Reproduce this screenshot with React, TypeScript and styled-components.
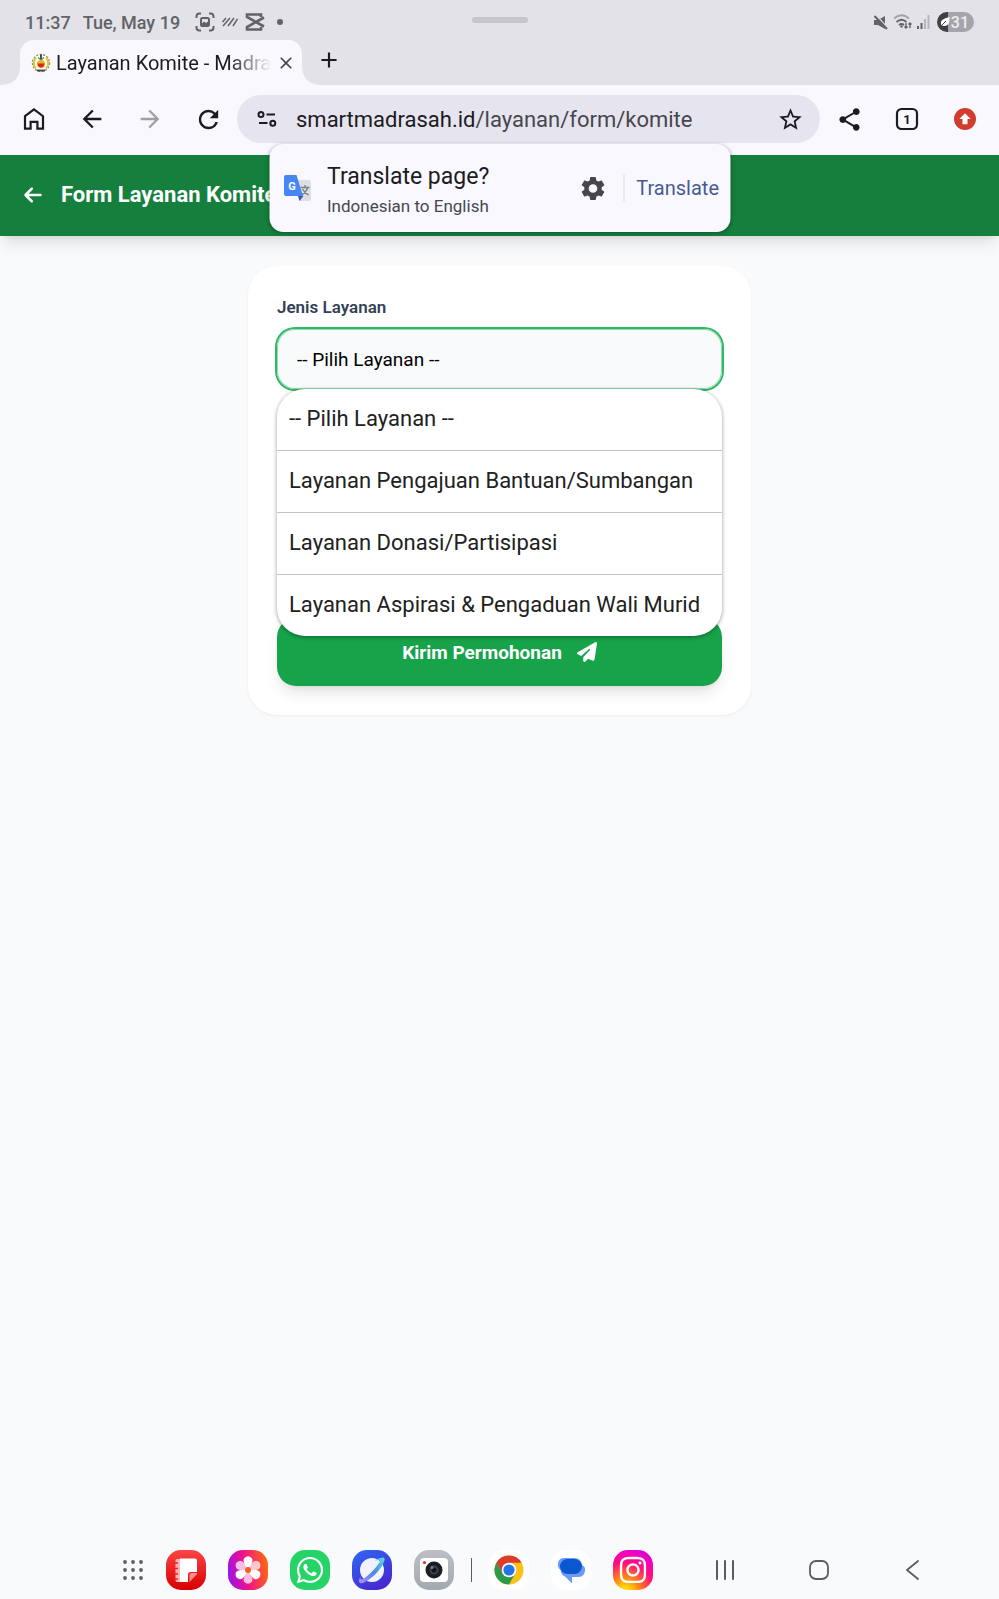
import React, { useState } from 'react'
import styled, { createGlobalStyle } from 'styled-components'
import {
	MdArrowBack,
	MdArrowForward,
	MdClose,
	MdAdd,
	MdRefresh,
	MdSettings,
	MdShare,
	MdStarBorder,
} from 'react-icons/md'
import { FaArrowLeft, FaPaperPlane, FaWhatsapp, FaInstagram } from 'react-icons/fa6'

const SERVICES = [
	{ id: '', name: '-- Pilih Layanan --' },
	{ id: 'bantuan', name: 'Layanan Pengajuan Bantuan/Sumbangan' },
	{ id: 'donasi', name: 'Layanan Donasi/Partisipasi' },
	{ id: 'aspirasi', name: 'Layanan Aspirasi & Pengaduan Wali Murid' },
]

const GlobalStyle = createGlobalStyle`
	* {
		box-sizing: border-box;
	}
	body {
		margin: 0;
		background: #f8fafc;
		font-family: Roboto, 'Liberation Sans', sans-serif;
	}
	button,
	select {
		font-family: inherit;
	}
	svg {
		display: block;
		flex-shrink: 0;
	}
`

const Screen = styled.div`
	min-height: 100vh;
	display: flex;
	flex-direction: column;
`

const PlainButton = styled.button`
	display: flex;
	align-items: center;
	justify-content: center;
	padding: 0;
	border: none;
	background: none;
	color: inherit;
	cursor: pointer;
`

/* status bar and tabs */

const TopArea = styled.div`
	background: #e2e2e8;
`

const StatusBar = styled.div`
	height: 40px;
	padding: 4px 25px 0;
	display: grid;
	grid-template-columns: 1fr auto 1fr;
	align-items: center;
	color: #626367;
	font-size: 18px;
	font-weight: 500;
`

const StatusGroup = styled.div<{ $end?: boolean }>`
	display: flex;
	align-items: center;
	justify-content: ${(p) => (p.$end ? 'flex-end' : 'flex-start')};
	gap: ${(p) => (p.$end ? 5 : 7)}px;
`

const StatusDate = styled.span`
	margin: 0 8px 0 5px;
`

const StatusDot = styled.span`
	width: 6px;
	height: 6px;
	margin-left: 5px;
	border-radius: 50%;
	background: currentColor;
`

const Handle = styled.div`
	width: 56px;
	height: 6px;
	margin-bottom: 4px;
	border-radius: 3px;
	background: #c6c6ca;
`

const Battery = styled.span`
	width: 37px;
	height: 20px;
	margin-left: 2px;
	padding: 0 5px 0 3px;
	display: flex;
	align-items: center;
	justify-content: space-between;
	border-radius: 10px;
	background: linear-gradient(90deg, #3f4044 31%, #a5a5a9 31%);
	color: #ececf0;
	font-size: 16px;
`

const TabStrip = styled.div`
	height: 45px;
	padding-left: 20px;
	display: flex;
`

const Tab = styled.div`
	position: relative;
	width: 282px;
	padding: 0 8px 0 11px;
	display: flex;
	align-items: center;
	gap: 5px;
	border-radius: 14px 14px 0 0;
	background: #f9f8fe;
	color: #46464d;
	&::before,
	&::after {
		content: '';
		position: absolute;
		bottom: 0;
		width: 16px;
		height: 16px;
	}
	&::before {
		right: 100%;
		background: radial-gradient(circle at 0 0, transparent 15px, #f9f8fe 16px);
	}
	&::after {
		left: 100%;
		background: radial-gradient(circle at 100% 0, transparent 15px, #f9f8fe 16px);
	}
`

const TabTitle = styled.span`
	flex: 1;
	white-space: nowrap;
	font-size: 20px;
	color: #1c1b21;
	mask-image: linear-gradient(90deg, #000 80%, transparent);
`

const NewTab = styled(PlainButton)`
	width: 54px;
	padding-bottom: 6px;
	color: #1c1b21;
`

/* address bar */

const Toolbar = styled.div`
	position: relative;
	z-index: 2;
	height: 70px;
	padding: 0 5px 2px;
	display: flex;
	align-items: center;
	background: #f9f8fe;
	color: #1c1b21;
`

const ToolButton = styled(PlainButton)<{ $faded?: boolean }>`
	width: 58px;
	height: 48px;
	opacity: ${(p) => (p.$faded ? 0.4 : 1)};
`

const Omnibox = styled.div`
	flex: 1;
	min-width: 0;
	height: 48px;
	padding: 0 16px 0 20px;
	display: flex;
	align-items: center;
	gap: 19px;
	border-radius: 24px;
	background: #e6e4ee;
`

const Address = styled.span`
	flex: 1;
	white-space: nowrap;
	font-size: 22px;
	color: #1c1b21;
`

const AddressPath = styled.span`
	color: #46464f;
`

const TranslateCard = styled.div`
	position: absolute;
	top: 59px;
	left: 50%;
	transform: translateX(-50%);
	width: 461px;
	height: 88px;
	padding: 0 11px 0 14px;
	display: flex;
	align-items: center;
	border-radius: 14px;
	background: #f9f8fe;
	box-shadow: 0 1px 4px rgba(0, 0, 0, 0.35);
`

const TranslateText = styled.div`
	flex: 1;
	margin-left: 15px;
	padding-top: 3px;
`

const TranslateTitle = styled.div`
	font-size: 23px;
	line-height: 32px;
`

const TranslateInfo = styled.div`
	font-size: 17px;
	line-height: 26px;
	color: #46464f;
`

const TranslateAction = styled(PlainButton)`
	height: 28px;
	margin-left: 16px;
	padding-left: 12px;
	border-left: 1px solid #dcdbe4;
	font-size: 20px;
	color: #465b96;
`

/* form page */

const PageHeader = styled.header`
	height: 81px;
	padding: 0 23px 2px;
	display: flex;
	align-items: center;
	gap: 18px;
	background: #15803d;
	box-shadow: 0 10px 15px -3px rgba(0, 0, 0, 0.1), 0 4px 6px -4px rgba(0, 0, 0, 0.1);
	color: #fff;
`

const BackLink = styled.a`
	color: inherit;
`

const PageTitle = styled.h1`
	margin: 0;
	font-size: 22px;
	font-weight: 700;
`

const Main = styled.main`
	flex: 1;
	padding: 30px 20px;
`

const Card = styled.form`
	width: 100%;
	max-width: 503px;
	margin: 0 auto;
	padding: 29px;
	border-radius: 29px;
	background: #fff;
	box-shadow: 0 1px 3px rgba(0, 0, 0, 0.06);
`

const FieldLabel = styled.label`
	display: block;
	margin-bottom: 10px;
	font-size: 17px;
	font-weight: 600;
	line-height: 24px;
	color: #334155;
`

const SelectBlock = styled.div`
	position: relative;
	margin-bottom: 229px;
`

const Select = styled.select`
	appearance: none;
	display: block;
	width: 100%;
	height: 60px;
	padding: 0 20px;
	border: none;
	border-radius: 18px;
	outline: none;
	background: #f8fafc;
	box-shadow: 0 0 0 2px #2fb865, inset 0 0 0 1px #8fdcae;
	font-size: 19px;
	color: #000;
`

const OptionList = styled.ul`
	position: absolute;
	top: 100%;
	left: 0;
	right: 0;
	margin: 0;
	padding: 0;
	overflow: hidden;
	list-style: none;
	border-radius: 28px;
	background: #fff;
	box-shadow: 0 1px 4px rgba(0, 0, 0, 0.4);
`

const OptionRow = styled.li`
	& + & {
		border-top: 1px solid #c4c4c4;
	}
`

const OptionButton = styled(PlainButton)`
	width: 100%;
	height: 61px;
	padding: 0 12px 2px;
	justify-content: flex-start;
	font-size: 22px;
	color: #212121;
`

const SubmitButton = styled(PlainButton)`
	width: 100%;
	height: 68px;
	gap: 15px;
	border-radius: 19px;
	background: #16a34a;
	box-shadow: 0 10px 15px -3px rgba(0, 0, 0, 0.1), 0 4px 6px -4px rgba(0, 0, 0, 0.1);
	font-size: 19px;
	font-weight: 700;
	color: #fff;
`

/* bottom dock */

const Dock = styled.nav`
	height: 58px;
	padding-left: 82px;
	display: flex;
	align-items: center;
	justify-content: center;
	color: #5c5d60;
`

const DockApps = styled.div`
	display: flex;
	align-items: center;
	gap: 22px;
`

const DockDivider = styled.span`
	width: 1px;
	height: 24px;
	margin: 0 -5px;
	background: #5c5d60;
`

const SystemKeys = styled.div`
	margin-left: 25px;
	display: flex;
`

const SystemKey = styled(PlainButton)`
	width: 94px;
	height: 40px;
`

const AppButton = styled(PlainButton)<{ $fill?: string }>`
	width: 40px;
	height: 40px;
	overflow: hidden;
	border-radius: 15px;
	background: ${(p) => p.$fill || 'none'};
	color: #fff;
`

const LogoIcon = () => (
	<svg width="20" height="20" viewBox="0 0 20 20">
		<circle cx="10" cy="10" r="8.500" fill="#fff" stroke="#8a8d5a" strokeWidth="1.400" strokeDasharray="2 1.500" />
		<path d="M5 4.500a8 8 0 0 0 0 11M15 4.500a8 8 0 0 1 0 11" fill="none" stroke="#e0c53a" strokeWidth="2" />
		<path d="M10 1.500v6" stroke="#222" strokeWidth="1.600" />
		<path d="M7 4.500 10 7l3-2.500" fill="none" stroke="#3c9a52" strokeWidth="1.200" />
		<circle cx="10" cy="11" r="4" fill="#efae23" />
		<path d="M6.500 10.500h7q-.5 4-3.500 4t-3.500-4z" fill="#d52a20" />
		<path d="M6 17.500h8" stroke="#444" strokeWidth="1.800" />
	</svg>
)

const HomeIcon = () => (
	<svg width="24" height="24" viewBox="0 0 24 24" fill="none" stroke="currentColor" strokeWidth="2.2">
		<path d="M3 9.200 12 2.400l9 6.800v12.400h-5.600v-6.800H8.600v6.800H3z" />
	</svg>
)

const TuneIcon = () => (
	<svg width="20" height="20" viewBox="0 0 20 20" fill="none" stroke="currentColor" strokeWidth="2">
		<circle cx="4" cy="5.500" r="2.500" />
		<path d="M9.500 5.500H18M2 14h8.500" />
		<circle cx="15.800" cy="14.200" r="2.500" />
	</svg>
)

const TabCountIcon = () => (
	<svg width="24" height="24" viewBox="0 0 24 24">
		<rect x="2" y="2" width="20" height="20" rx="4.500" fill="none" stroke="currentColor" strokeWidth="2.200" />
		<text x="12" y="16.500" textAnchor="middle" fontSize="13" fontWeight="700" fill="currentColor">
			1
		</text>
	</svg>
)

const UpdateIcon = () => (
	<svg width="22" height="22" viewBox="0 0 22 22">
		<circle cx="11" cy="11" r="11" fill="#d03d2e" />
		<path d="M11 5.200 5.300 11h3.200v5.200h5V11h3.200z" fill="#fff" />
	</svg>
)

const TranslateIcon = () => (
	<svg width="29" height="28" viewBox="0 0 29 28">
		<path d="M12 6h13.500q2 0 2 2v17q0 2-2 2H16z" fill="#dddfe3" />
		<path d="M17 13.500h9M21.500 11v2.500M24.500 13.500q-2 5-6.500 7.500M19 15q2 4 6 6" fill="none" stroke="#7b8088" strokeWidth="1.400" />
		<path d="M14.500 22h5.500l-4 5z" fill="#3558c4" />
		<path d="M2.500 1h10.500l6.500 21H2.500Q.5 22 .5 20V3q0-2 2-2z" fill="#4688f1" />
		<text x="8.500" y="15.500" textAnchor="middle" fontSize="11" fontWeight="700" fill="#fff">
			G
		</text>
	</svg>
)

const CaptureIcon = () => (
	<svg width="20" height="20" viewBox="0 0 20 20" fill="none" stroke="currentColor" strokeWidth="2">
		<path d="M1.500 6V4.500q0-3 3-3H6M14 1.500h1.500q3 0 3 3V6M18.500 14v1.500q0 3-3 3H14M6 18.500H4.500q-3 0-3-3V14" />
		<rect x="6" y="6" width="8" height="8" rx="1.500" />
		<path d="m6 13 3-3 2 1.500L13 10v4H6z" fill="currentColor" strokeWidth="1" />
	</svg>
)

const StripesIcon = () => (
	<svg width="16" height="10" viewBox="0 0 16 10" stroke="currentColor" strokeWidth="1.500">
		<path d="m.5 5 3.500-4M1 9l7-8M6 9l6-8M11 9l4.500-7" />
	</svg>
)

const CapcutIcon = () => (
	<svg width="20" height="18" viewBox="0 0 20 18" fill="none" stroke="currentColor" strokeWidth="2.600">
		<path d="M19 4.500 2 14v2.500h14V14M19 13.500 2 4V1.500h14V4" />
	</svg>
)

const MuteIcon = () => (
	<svg width="14" height="15" viewBox="0 0 14 15" fill="currentColor">
		<path d="M0 5h4l7-4v13l-7-4H0z" />
		<path d="m2 0 12 13" stroke="#e2e2e8" strokeWidth="1.200" />
		<path d="m.5 1 12.500 13" stroke="currentColor" strokeWidth="2" />
	</svg>
)

const WifiIcon = () => (
	<svg width="19" height="16" viewBox="0 0 19 16" fill="none" stroke="currentColor" strokeWidth="1.700">
		<path d="M1 4.500q7.500-6.500 15 0" opacity=".5" />
		<path d="M3.500 8q5-4.500 10 0M6 11q2.500-2 5 0" />
		<circle cx="8.500" cy="12.500" r="1.200" fill="currentColor" stroke="none" />
		<path d="M13 9v5m-1.500-1.500L13 14l1.500-1.500M17 14V9m-1.500 1.500L17 9l1.500 1.500" strokeWidth="1.400" />
	</svg>
)

const SignalIcon = () => (
	<svg width="13" height="14" viewBox="0 0 13 14" fill="currentColor">
		<path d="M0 11h2v3H0zM3.500 8h2v6h-2z" />
		<path d="M7 4h2v10H7zM10.500 0h2v14h-2z" opacity=".35" />
	</svg>
)

const LeafIcon = () => (
	<svg width="10" height="12" viewBox="0 0 10 12">
		<path d="M9.500 1Q10 10 4.500 10 0 10 1 6q.5-3 8.500-5z" fill="#fff" />
		<path d="M0 11 6 5" stroke="#3f4044" />
	</svg>
)

const AppsIcon = () => (
	<svg width="22" height="22" viewBox="0 0 22 22" fill="currentColor">
		{[3, 11, 19].map((y) => [3, 11, 19].map((x) => <circle key={`${x}-${y}`} cx={x} cy={y} r="1.900" />))}
	</svg>
)

const NotesIcon = () => (
	<svg width="40" height="40" viewBox="0 0 40 40">
		<path d="M11 9h4v23h-4q-1.500 0-1.500-2V11q0-2 1.500-2z" fill="#ffb5b5" />
		<path d="M8 13h4M8 18.500h4M8 24h4M8 29h4" stroke="#e92026" strokeWidth="1.600" />
		<path d="M14 8.500h15q2 0 2 2V22h-6q-3 0-3 3v7h-8z" fill="#fff" />
		<path d="M31 23v1l-7.500 8V25.500q0-2.500 2.500-2.500z" fill="#ff8f8f" />
	</svg>
)

const GalleryIcon = () => (
	<svg width="40" height="40" viewBox="0 0 40 40">
		{[0, 60, 120, 180, 240, 300].map((angle) => (
			<path
				key={angle}
				d="M20 20Q14 11.500 16 8.500 20 4 24 8.500 26 11.500 20 20z"
				fill="#fff"
				opacity={angle % 120 === 0 ? 1 : 0.72}
				transform={`rotate(${angle} 20 20)`}
			/>
		))}
		<circle cx="20" cy="20" r="3" fill="#f4631e" />
	</svg>
)

const BrowserIcon = () => (
	<svg width="40" height="40" viewBox="0 0 40 40">
		<defs>
			<linearGradient id="ring" x1="0" y1="1" x2="1" y2="0">
				<stop offset="0" stopColor="#b58cf2" />
				<stop offset=".5" stopColor="#4f86e6" />
				<stop offset="1" stopColor="#58dfd8" />
			</linearGradient>
		</defs>
		<circle cx="20" cy="20" r="12" fill="#f2f2ff" />
		<path
			d="M9 25Q4 35 11 33 22 28 30 16 35 7 30.500 7.500 26 8 23 10.500 30 8.500 27 13 21 22 12 28.500 7 31 9 25z"
			fill="url(#ring)"
		/>
	</svg>
)

const CameraIcon = () => (
	<svg width="40" height="40" viewBox="0 0 40 40">
		<rect x="6" y="8" width="28" height="24" rx="4" fill="#fff" />
		<circle cx="10.500" cy="12.500" r="1.600" fill="#d33" />
		<circle cx="20" cy="20" r="8.500" fill="#1d1e22" />
		<circle cx="20" cy="20" r="4.500" fill="#39424c" />
		<circle cx="20" cy="20" r="2.500" fill="#11161d" />
		<circle cx="18" cy="17.500" r="1.500" fill="#6d8496" />
	</svg>
)

const ChromeIcon = () => (
	<svg width="40" height="40" viewBox="0 0 40 40">
		<circle cx="20" cy="20" r="14.500" fill="#fbc116" />
		<path d="M7.440 12.750A14.500 14.500 0 0 1 32.560 12.750H20L13.720 23.620z" fill="#de3b2c" />
		<path d="M7.440 12.750A14.500 14.500 0 0 0 20 34.500L26.280 23.620 20 27.250 13.720 23.620z" fill="#2f9a4c" />
		<circle cx="20" cy="20" r="7.250" fill="#fff" />
		<circle cx="20" cy="20" r="5.600" fill="#2474e8" />
	</svg>
)

const MessagesIcon = () => (
	<svg width="40" height="40" viewBox="0 0 40 40">
		<path d="M13 8h10q7 0 8 7 4 2 3 6-1 6-7 6h-6v6.500L14.500 27Q10 25 9.500 20 6 17 7 13q1-5 6-5z" fill="#6a9cf5" />
		<rect x="9" y="9" width="22" height="15" rx="7.500" fill="#0b57d0" />
	</svg>
)

const RecentsIcon = () => (
	<svg width="20" height="20" viewBox="0 0 20 20" stroke="currentColor" strokeWidth="2" strokeLinecap="round">
		<path d="M2 1v18M10 1v18M18 1v18" />
	</svg>
)

const HomeKeyIcon = () => (
	<svg width="20" height="20" viewBox="0 0 20 20" fill="none" stroke="currentColor" strokeWidth="1.800">
		<rect x="1" y="1" width="18" height="18" rx="6" />
	</svg>
)

const BackKeyIcon = () => (
	<svg width="20" height="20" viewBox="0 0 20 20" fill="none" stroke="currentColor" strokeWidth="1.800">
		<path d="M15 1 4 10l11 9" strokeLinecap="round" strokeLinejoin="round" />
	</svg>
)

const BrowserChrome = () => (
	<>
		<TopArea>
			<StatusBar>
				<StatusGroup>
					<span>11:37</span>
					<StatusDate>Tue, May 19</StatusDate>
					<CaptureIcon />
					<StripesIcon />
					<CapcutIcon />
					<StatusDot />
				</StatusGroup>
				<Handle />
				<StatusGroup $end>
					<MuteIcon />
					<WifiIcon />
					<SignalIcon />
					<Battery>
						<LeafIcon />
						31
					</Battery>
				</StatusGroup>
			</StatusBar>
			<TabStrip>
				<Tab>
					<LogoIcon />
					<TabTitle>Layanan Komite - Madra</TabTitle>
					<PlainButton aria-label="Close tab">
						<MdClose size={20} />
					</PlainButton>
				</Tab>
				<NewTab aria-label="New tab">
					<MdAdd size={26} />
				</NewTab>
			</TabStrip>
		</TopArea>
		<Toolbar>
			<ToolButton aria-label="Home">
				<HomeIcon />
			</ToolButton>
			<ToolButton aria-label="Back">
				<MdArrowBack size={28} />
			</ToolButton>
			<ToolButton aria-label="Forward" $faded>
				<MdArrowForward size={28} />
			</ToolButton>
			<ToolButton aria-label="Reload">
				<MdRefresh size={29} />
			</ToolButton>
			<Omnibox>
				<TuneIcon />
				<Address>
					smartmadrasah.id<AddressPath>/layanan/form/komite</AddressPath>
				</Address>
				<PlainButton aria-label="Bookmark">
					<MdStarBorder size={27} />
				</PlainButton>
			</Omnibox>
			<ToolButton aria-label="Share">
				<MdShare size={27} />
			</ToolButton>
			<ToolButton aria-label="Tabs">
				<TabCountIcon />
			</ToolButton>
			<ToolButton aria-label="Update">
				<UpdateIcon />
			</ToolButton>
			<TranslateCard>
				<TranslateIcon />
				<TranslateText>
					<TranslateTitle>Translate page?</TranslateTitle>
					<TranslateInfo>Indonesian to English</TranslateInfo>
				</TranslateText>
				<PlainButton aria-label="Translate settings">
					<MdSettings size={29} color="#46464f" />
				</PlainButton>
				<TranslateAction>Translate</TranslateAction>
			</TranslateCard>
		</Toolbar>
	</>
)

const BottomDock = () => (
	<Dock>
		<DockApps>
			<PlainButton aria-label="Apps">
				<AppsIcon />
			</PlainButton>
			<AppButton aria-label="Notes" $fill="linear-gradient(#fb4444, #d90000)">
				<NotesIcon />
			</AppButton>
			<AppButton aria-label="Gallery" $fill="linear-gradient(80deg, #8d14f5, #f0128b 45%, #ff7300)">
				<GalleryIcon />
			</AppButton>
			<AppButton aria-label="WhatsApp" $fill="#25d366">
				<FaWhatsapp size={30} />
			</AppButton>
			<AppButton aria-label="Internet" $fill="linear-gradient(150deg, #2d69f5, #4a1fc9)">
				<BrowserIcon />
			</AppButton>
			<AppButton aria-label="Camera" $fill="linear-gradient(#bcc0c6, #a4a9b0)">
				<CameraIcon />
			</AppButton>
			<DockDivider />
			<AppButton aria-label="Chrome" $fill="#fff">
				<ChromeIcon />
			</AppButton>
			<AppButton aria-label="Messages" $fill="#fff">
				<MessagesIcon />
			</AppButton>
			<AppButton
				aria-label="Instagram"
				$fill="radial-gradient(circle at 30% 105%, #ffd60a 10%, #ff7a1a 32%, #ff0f7b 58%, #f400c0 78%, #a010f0)">
				<FaInstagram size={30} />
			</AppButton>
		</DockApps>
		<SystemKeys>
			<SystemKey aria-label="Recents">
				<RecentsIcon />
			</SystemKey>
			<SystemKey aria-label="Home screen">
				<HomeKeyIcon />
			</SystemKey>
			<SystemKey aria-label="Go back">
				<BackKeyIcon />
			</SystemKey>
		</SystemKeys>
	</Dock>
)

const App = () => {
	const [service, setService] = useState('')
	const [open, setOpen] = useState(true)

	const handlePick = (id: string) => {
		setService(id)
		setOpen(false)
	}

	return (
		<Screen>
			<GlobalStyle />
			<BrowserChrome />
			<PageHeader>
				<BackLink href="#" aria-label="Kembali">
					<FaArrowLeft size={20} />
				</BackLink>
				<PageTitle>Form Layanan Komite</PageTitle>
			</PageHeader>
			<Main>
				<Card onSubmit={(e) => e.preventDefault()}>
					<FieldLabel htmlFor="service">Jenis Layanan</FieldLabel>
					<SelectBlock>
						<Select id="service" name="service" value={service} onChange={(e) => handlePick(e.target.value)}>
							{SERVICES.map((item) => (
								<option value={item.id} key={item.id}>
									{item.name}
								</option>
							))}
						</Select>
						{open && (
							<OptionList>
								{SERVICES.map((item) => (
									<OptionRow key={item.id}>
										<OptionButton type="button" onClick={() => handlePick(item.id)}>
											{item.name}
										</OptionButton>
									</OptionRow>
								))}
							</OptionList>
						)}
					</SelectBlock>
					<SubmitButton type="submit">
						Kirim Permohonan
						<FaPaperPlane size={20} />
					</SubmitButton>
				</Card>
			</Main>
			<BottomDock />
		</Screen>
	)
}

export default App
